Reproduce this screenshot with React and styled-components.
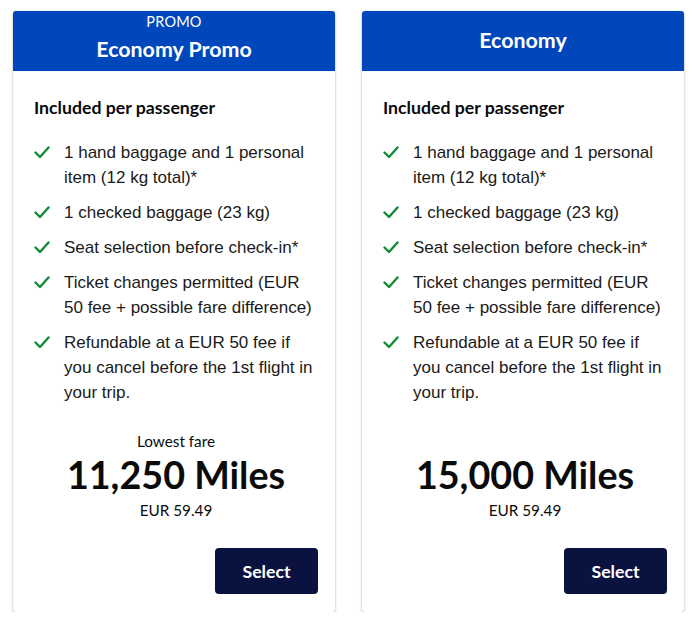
import React from "react";
import styled, { createGlobalStyle } from "styled-components";

const GlobalStyle = createGlobalStyle`
  body {
    margin: 0;
    background: #ffffff;
    font-family: "Liberation Sans", Arial, sans-serif;
  }
`;

const Page = styled.div`
  display: grid;
  grid-template-columns: 322px 322px;
  gap: 27px;
  padding: 11px 16px 0 13px;
`;

const Card = styled.div`
  display: flex;
  flex-direction: column;
  height: 601px;
  background: #ffffff;
  border-radius: 3px;
  box-shadow: 0 1px 3px rgba(0, 0, 0, 0.28), 0 0 1px rgba(0, 0, 0, 0.14);
  overflow: hidden;
`;

const Header = styled.div`
  display: flex;
  flex-direction: column;
  align-items: center;
  justify-content: center;
  height: 60px;
  background: #0047bb;
  color: #ffffff;
  font-family: Lato, "Noto Sans", sans-serif;
`;

const Tag = styled.div`
  font-size: 14.5px;
  line-height: 16px;
  margin-top: -8px;
  margin-bottom: 7px;
  letter-spacing: 0.2px;
`;

const Name = styled.div`
  font-size: 21.4px;
  font-weight: 700;
  line-height: 24px;
  margin-top: ${(p) => (p.$solo ? "-3px" : "0")};
`;

const Body = styled.div`
  display: flex;
  flex-direction: column;
  flex: 1;
  padding: 27px 17px 17px 21px;
`;

const Subtitle = styled.div`
  font-family: Lato, "Noto Sans", sans-serif;
  font-size: 17.7px;
  font-weight: 700;
  line-height: 20px;
  color: #0b0b0b;
`;

const List = styled.ul`
  list-style: none;
  margin: 22px 0 0;
  padding: 0;
  display: flex;
  flex-direction: column;
  gap: 10px;
`;

const Item = styled.li`
  display: flex;
  gap: 14px;
  font-size: 17px;
  line-height: 25px;
  color: #1a1a1a;
`;

const Check = styled.svg`
  flex: none;
  width: 16px;
  height: 13px;
  margin-top: 6px;
`;

const Price = styled.div`
  display: flex;
  flex-direction: column;
  align-items: center;
  margin-top: 26px;
  font-family: Lato, "Noto Sans", sans-serif;
  color: #0b0b0b;
`;

const Note = styled.div`
  font-size: 15.3px;
  line-height: 20px;
  height: 20px;
`;

const Miles = styled.div`
  font-size: 37.7px;
  font-weight: 700;
  line-height: 44px;
  margin-top: 2px;
`;

const Eur = styled.div`
  font-size: 15.3px;
  line-height: 20px;
  margin-top: 3px;
`;

const Footer = styled.div`
  display: flex;
  justify-content: flex-end;
  margin-top: 28px;
`;

const SelectButton = styled.button`
  width: 103px;
  height: 46px;
  border: none;
  border-radius: 4px;
  background: #0a1240;
  color: #ffffff;
  font-family: Lato, "Noto Sans", sans-serif;
  font-size: 17.7px;
  font-weight: 700;
  cursor: pointer;
`;

const features = [
  "1 hand baggage and 1 personal item (12 kg total)*",
  "1 checked baggage (23 kg)",
  "Seat selection before check-in*",
  "Ticket changes permitted (EUR 50 fee + possible fare difference)",
  "Refundable at a EUR 50 fee if you cancel before the 1st flight in your trip.",
];

const fares = [
  { tag: "PROMO", name: "Economy Promo", note: "Lowest fare", miles: "11,250 Miles", eur: "EUR 59.49" },
  { name: "Economy", miles: "15,000 Miles", eur: "EUR 59.49" },
];

const CheckIcon = () => (
  <Check viewBox="0 0 16 13">
    <polyline
      points="1.5,6.5 6,11 14.5,1.5"
      fill="none"
      stroke="#138a36"
      strokeWidth="2.4"
      strokeLinecap="round"
      strokeLinejoin="round"
    />
  </Check>
);

const FareCard = ({ fare }) => (
  <Card>
    <Header>
      {fare.tag && <Tag>{fare.tag}</Tag>}
      <Name $solo={!fare.tag}>{fare.name}</Name>
    </Header>
    <Body>
      <Subtitle>Included per passenger</Subtitle>
      <List>
        {features.map((f) => (
          <Item key={f}>
            <CheckIcon />
            <span>{f}</span>
          </Item>
        ))}
      </List>
      <Price>
        <Note>{fare.note}</Note>
        <Miles>{fare.miles}</Miles>
        <Eur>{fare.eur}</Eur>
      </Price>
      <Footer>
        <SelectButton>Select</SelectButton>
      </Footer>
    </Body>
  </Card>
);

const App = () => (
  <>
    <GlobalStyle />
    <Page>
      {fares.map((fare) => (
        <FareCard key={fare.name} fare={fare} />
      ))}
    </Page>
  </>
);

export default App;
